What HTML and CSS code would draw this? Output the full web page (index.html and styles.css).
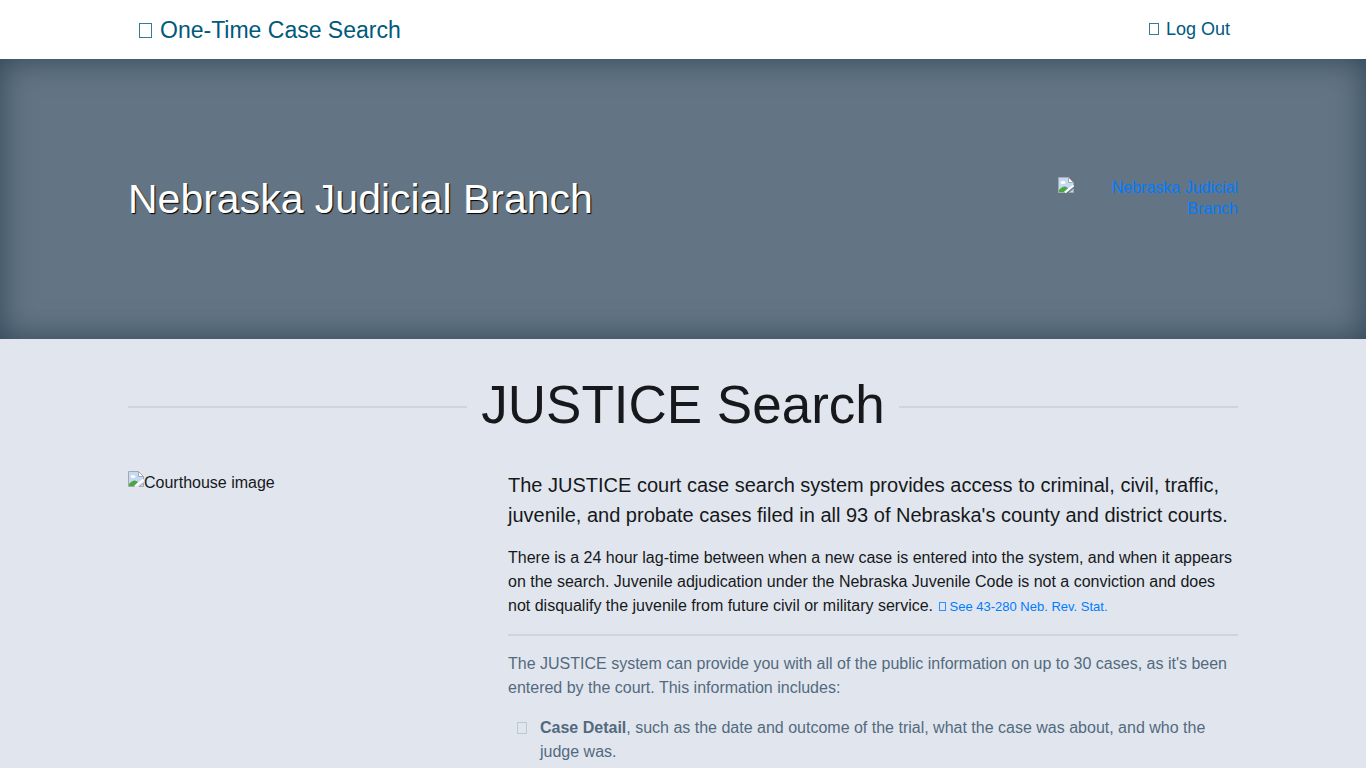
FILE: index.html
```html
<!DOCTYPE html>
<html lang="en">
<head>
<meta charset="utf-8">
<meta name="viewport" content="width=device-width, initial-scale=1">
<title>JUSTICE - One-Time Case Search</title>
<link rel="stylesheet" href="styles.css">
</head>
<body>
<header class="topbar">
  <div class="container topbar-inner">
    <a class="brand" href="#"><span class="glyph glyph-lg"></span>One-Time Case Search</a>
    <a class="logout" href="#"><span class="glyph"></span>Log Out</a>
  </div>
</header>
<section class="banner">
  <div class="container banner-inner">
    <h2 class="banner-title">Nebraska Judicial Branch</h2>
    <a class="seal" href="#">
      <svg class="missing" viewBox="0 0 16 16" aria-hidden="true"><path d="M.5 15.500V.5h10l5 5v4" fill="#c6d9f4"/><path d="M.5.5h10l5 5v3L8 15.500H.5z" fill="#c6d9f4" stroke="#a4a9ad"/><path d="M10.500.5v5h5z" fill="#fff" stroke="#a4a9ad"/><ellipse cx="5" cy="5.500" rx="2.500" ry="1.500" fill="#fff"/><path d="M1 15v-2q5-6 9-2l-4 4z" fill="#4ca640"/><path d="M7 15.500l8.500-7" fill="none" stroke="#fff" stroke-width="2"/><path d="M11 15.500h4.500V12z" fill="#c6d9f4" stroke="#a4a9ad"/></svg>
      <span class="seal-text">Nebraska Judicial Branch</span>
    </a>
  </div>
</section>
<main class="container">
  <h1 class="page-title">JUSTICE Search</h1>
  <div class="columns">
    <div class="picture">
      <svg class="missing" viewBox="0 0 16 16" aria-hidden="true"><path d="M.5.5h10l5 5v3L8 15.500H.5z" fill="#c6d9f4" stroke="#a4a9ad"/><path d="M10.500.5v5h5z" fill="#fff" stroke="#a4a9ad"/><ellipse cx="5" cy="5.500" rx="2.500" ry="1.500" fill="#fff"/><path d="M1 15v-2q5-6 9-2l-4 4z" fill="#4ca640"/><path d="M7 15.500l8.500-7" fill="none" stroke="#fff" stroke-width="2"/><path d="M11 15.500h4.500V12z" fill="#c6d9f4" stroke="#a4a9ad"/></svg>
      <span>Courthouse image</span>
    </div>
    <div class="copy">
      <p class="lead">The JUSTICE court case search system provides access to criminal, civil, traffic, juvenile, and probate cases filed in all 93 of Nebraska's county and district courts.</p>
      <p>There is a 24 hour lag-time between when a new case is entered into the system, and when it appears on the search. Juvenile adjudication under the Nebraska Juvenile Code is not a conviction and does not disqualify the juvenile from future civil or military service. <a class="statute" href="#"><span class="glyph glyph-sm"></span>See 43-280 Neb. Rev. Stat.</a></p>
      <hr>
      <div class="muted">
        <p>The JUSTICE system can provide you with all of the public information on up to 30 cases, as it's been entered by the court. This information includes:</p>
        <ul class="details">
          <li><span class="glyph glyph-list"></span><span><strong>Case Detail</strong>, such as the date and outcome of the trial, what the case was about, and who the judge was.</span></li>
        </ul>
      </div>
    </div>
  </div>
</main>
</body>
</html>
```

FILE: styles.css
```css
*, *::before, *::after { box-sizing: border-box; }
body {
  margin: 0;
  background: #e1e6ee;
  color: #16181b;
  font: 16px/24px "Liberation Sans", Arial, sans-serif;
}
a { color: #007bff; text-decoration: none; }
p { margin: 0 0 16px; }
.container {
  width: 100%;
  max-width: 1140px;
  margin: 0 auto;
  padding: 0 15px;
}
.glyph {
  display: inline-block;
  width: 10px;
  height: 12px;
  margin-right: 7px;
  border: 1px solid currentColor;
  opacity: 0.8;
}
.glyph-lg { width: 13px; height: 15px; margin-right: 8px; }
.glyph-sm { width: 7px; height: 9px; margin-right: 4px; }

.topbar { background: #fff; }
.topbar-inner {
  display: flex;
  justify-content: space-between;
  align-items: center;
  padding: 12px 23px 11px 26px;
}
.topbar a { color: #005a7c; }
.brand { font-size: 23px; line-height: 36px; }
.topbar .logout { padding-bottom: 2px; font-size: 18px; }

.banner {
  background: #637584;
  box-shadow: inset 0 0 32px #2f4557;
}
.banner-inner {
  display: flex;
  justify-content: space-between;
  align-items: center;
  min-height: 280px;
}
.banner-title {
  margin: 0;
  color: #fff;
  font-size: 41px;
  font-weight: 400;
  line-height: 52px;
  text-shadow: 1px 1px 1px #000;
}
.seal {
  display: flex;
  width: 180px;
  padding-bottom: 2px;
  line-height: 21px;
  text-align: right;
}
.seal-text { flex: 1; padding-left: 20px; }
.missing { flex: none; width: 16px; height: 16px; }

.page-title {
  display: flex;
  align-items: center;
  gap: 14px;
  margin: 0;
  padding: 32px 0 31px;
  font-size: 53px;
  font-weight: 400;
  line-height: 68px;
}
.page-title::before, .page-title::after {
  content: "";
  flex: 1;
  height: 2px;
  margin-top: 4px;
  background: #cdd6df;
}
.columns {
  display: grid;
  grid-template-columns: minmax(0, 350fr) minmax(0, 730fr);
  column-gap: 30px;
}
.picture { display: flex; padding-top: 1px; line-height: 23px; }
.lead { font-size: 20px; line-height: 30px; }
.statute { margin-left: 1px; font-size: 13px; }
hr {
  height: 2px;
  margin: 15px 0 16px;
  border: 0;
  background: #cdd6df;
}
.copy > p:nth-of-type(2) { margin-bottom: 15px; }
.muted { color: #536a7e; }
.details { margin: 0; padding: 0; list-style: none; }
.details li { display: flex; padding-left: 9px; }
.glyph-list {
  flex: none;
  margin: 6px 13px 0 0;
  border-color: #b3c0cc;
}
```
